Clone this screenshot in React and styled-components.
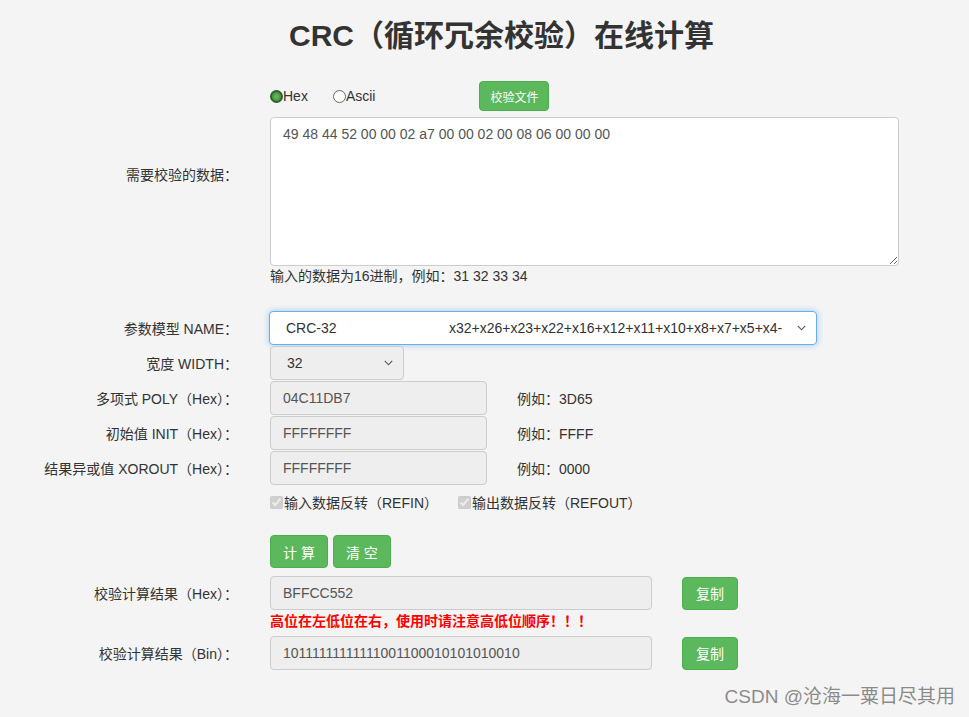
import React from 'react';
import styled, { createGlobalStyle } from 'styled-components';

const GlobalStyle = createGlobalStyle`
  html, body {
    margin: 0;
    padding: 0;
    background: #f4f4f4;
  }
  body {
    font-family: 'Liberation Sans', Helvetica, 'Noto Sans CJK SC', sans-serif;
    font-size: 14px;
    color: #333;
  }
  * {
    box-sizing: border-box;
  }
`;

const Page = styled.div`
  position: relative;
  width: 969px;
  height: 717px;
  overflow: hidden;
`;

const Title = styled.h1`
  margin: 16px 0 0;
  padding-left: 34px;
  height: 40px;
  line-height: 40px;
  text-align: center;
  font-size: 30px;
  font-weight: bold;
  color: #333;
`;

const Row = styled.div`
  display: grid;
  grid-template-columns: 238px 1fr;
  column-gap: 32px;
  align-items: center;
  margin-top: ${(p) => p.$top || 0}px;
`;

const Label = styled.label`
  text-align: right;
  white-space: nowrap;
  color: #333;
`;

const Field = styled.div`
  display: flex;
  align-items: center;
  min-height: ${(p) => p.$h || 0}px;
`;

const Stack = styled.div`
  display: flex;
  flex-direction: column;
`;

const RadioRow = styled.div`
  display: flex;
  align-items: center;
  height: 30px;
`;

const RadioItem = styled.label`
  display: flex;
  align-items: center;
  margin-right: ${(p) => p.$mr || 0}px;
`;

const RadioDot = styled.span`
  width: 13px;
  height: 13px;
  border-radius: 50%;
  border: ${(p) => (p.$on ? '2px solid #2e5f2e' : '1px solid #666')};
  background: ${(p) => (p.$on ? '#5fb35a' : '#fff')};
  box-shadow: ${(p) => (p.$on ? 'inset 0 0 0 2px #4f9a4b' : 'none')};
`;

const GreenButton = styled.button`
  height: ${(p) => p.$h || 33}px;
  padding: 0 ${(p) => p.$px || 12}px;
  margin-left: ${(p) => p.$ml || 0}px;
  margin-right: ${(p) => p.$mr || 0}px;
  background: #5cb85c;
  border: 1px solid #4cae4c;
  border-radius: 4px;
  color: #fff;
  font-family: inherit;
  font-size: ${(p) => p.$fs || 14}px;
  white-space: pre;
  cursor: pointer;
`;

const TextArea = styled.textarea`
  width: 629px;
  height: 149px;
  margin-top: 6px;
  padding: 8px 12px;
  border: 1px solid #ccc;
  border-radius: 4px;
  background: #fff;
  font-family: inherit;
  font-size: 14px;
  color: #555;
  resize: both;
`;

const Hint = styled.div`
  height: 20px;
  line-height: 20px;
  color: #333;
`;

const SelectBox = styled.div`
  display: flex;
  align-items: center;
  width: ${(p) => p.$w}px;
  height: 34px;
  padding: 0 10px 0 16px;
  margin-left: ${(p) => p.$ml || 0}px;
  border: 1px solid ${(p) => (p.$focus ? '#66afe9' : '#ccc')};
  border-radius: 4px;
  background: ${(p) => (p.$focus ? '#fff' : '#eee')};
  box-shadow: ${(p) => (p.$focus ? '0 0 6px rgba(102,175,233,0.6)' : 'none')};
  color: #333;
`;

const SelectMain = styled.span`
  width: ${(p) => p.$w || 0}px;
  flex: ${(p) => (p.$w ? 'none' : 1)};
  white-space: nowrap;
  overflow: hidden;
`;

const Chevron = styled.svg`
  flex: none;
  width: 9px;
  height: 6px;
  margin-left: auto;
`;

const TextInput = styled.input`
  width: ${(p) => p.$w}px;
  height: 34px;
  padding: 0 12px;
  border: 1px solid #ccc;
  border-radius: 4px;
  background: #eee;
  font-family: inherit;
  font-size: 14px;
  color: #555;
`;

const Example = styled.span`
  margin-left: 30px;
  color: #333;
`;

const CheckItem = styled.label`
  display: flex;
  align-items: center;
  margin-right: ${(p) => p.$mr || 0}px;
  color: #333;
`;

const CheckBox = styled.input`
  margin: 0 1px 0 0;
  width: 13px;
  height: 13px;
`;

const Warning = styled.div`
  height: 20px;
  line-height: 20px;
  color: #f00;
  font-weight: bold;
`;

const Watermark = styled.div`
  position: absolute;
  right: 14px;
  bottom: 9px;
  font-size: 19px;
  color: #8a8a8a;
  text-shadow: 0 0 1px #fff;
`;

const ChevronIcon = () => (
  <Chevron viewBox="0 0 9 6">
    <path d="M0.8 0.8 L4.5 4.8 L8.2 0.8" fill="none" stroke="#555" strokeWidth="1.1" />
  </Chevron>
);

const App = () => {
  return (
    <>
      <GlobalStyle />
      <Page>
        <Title>CRC（循环冗余校验）在线计算</Title>

        {/* 数据输入 */}
        <Row $top={25}>
          <Label>需要校验的数据：</Label>
          <Stack>
            <RadioRow>
              <RadioItem $mr={25}>
                <RadioDot $on />
                Hex
              </RadioItem>
              <RadioItem>
                <RadioDot />
                Ascii
              </RadioItem>
              <GreenButton $h={30} $px={10} $fs={12} $ml={104}>校验文件</GreenButton>
            </RadioRow>
            <TextArea defaultValue="49 48 44 52 00 00 02 a7 00 00 02 00 08 06 00 00 00" />
          </Stack>
        </Row>
        <Row>
          <span />
          <Hint>输入的数据为16进制，例如：31 32 33 34</Hint>
        </Row>

        {/* 参数 */}
        <Row $top={25}>
          <Label>参数模型 NAME：</Label>
          <Field>
            <SelectBox $w={548} $ml={-1} $focus>
              <SelectMain $w={163}>CRC-32</SelectMain>
              <SelectMain>x32+x26+x23+x22+x16+x12+x11+x10+x8+x7+x5+x4-</SelectMain>
              <ChevronIcon />
            </SelectBox>
          </Field>
        </Row>
        <Row $top={1}>
          <Label>宽度 WIDTH：</Label>
          <Field>
            <SelectBox $w={134}>
              <SelectMain>32</SelectMain>
              <ChevronIcon />
            </SelectBox>
          </Field>
        </Row>
        <Row $top={1}>
          <Label>多项式 POLY（Hex）：</Label>
          <Field>
            <TextInput $w={217} defaultValue="04C11DB7" />
            <Example>例如：3D65</Example>
          </Field>
        </Row>
        <Row $top={1}>
          <Label>初始值 INIT（Hex）：</Label>
          <Field>
            <TextInput $w={217} defaultValue="FFFFFFFF" />
            <Example>例如：FFFF</Example>
          </Field>
        </Row>
        <Row $top={1}>
          <Label>结果异或值 XOROUT（Hex）：</Label>
          <Field>
            <TextInput $w={217} defaultValue="FFFFFFFF" />
            <Example>例如：0000</Example>
          </Field>
        </Row>
        <Row $top={5}>
          <span />
          <Field $h={24}>
            <CheckItem $mr={20}>
              <CheckBox type="checkbox" checked disabled readOnly />
              输入数据反转（REFIN）
            </CheckItem>
            <CheckItem>
              <CheckBox type="checkbox" checked disabled readOnly />
              输出数据反转（REFOUT）
            </CheckItem>
          </Field>
        </Row>
        <Row $top={21}>
          <span />
          <Field>
            <GreenButton $mr={5}>计 算</GreenButton>
            <GreenButton>清 空</GreenButton>
          </Field>
        </Row>

        {/* 结果 */}
        <Row $top={8}>
          <Label>校验计算结果（Hex）：</Label>
          <Field>
            <TextInput $w={382} defaultValue="BFFCC552" />
            <GreenButton $px={13} $ml={30}>复制</GreenButton>
          </Field>
        </Row>
        <Row $top={1}>
          <span />
          <Warning>高位在左低位在右，使用时请注意高低位顺序！！！</Warning>
        </Row>
        <Row $top={5}>
          <Label>校验计算结果（Bin）：</Label>
          <Field>
            <TextInput $w={382} defaultValue="10111111111111001100010101010010" />
            <GreenButton $px={13} $ml={30}>复制</GreenButton>
          </Field>
        </Row>

        <Watermark>CSDN @沧海一粟日尽其用</Watermark>
      </Page>
    </>
  );
};

export default App;
